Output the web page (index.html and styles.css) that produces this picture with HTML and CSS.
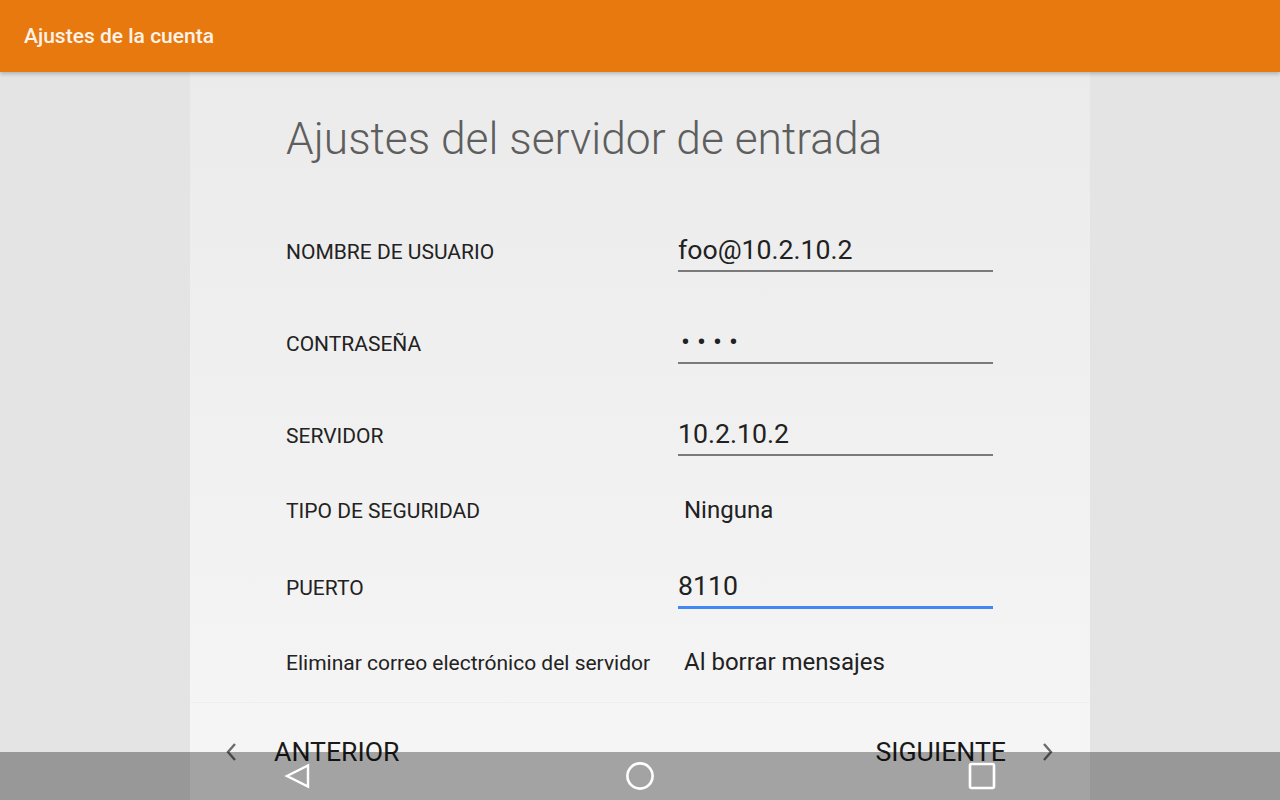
FILE: index.html
```html
<!DOCTYPE html>
<html lang="es">
<head>
<meta charset="utf-8">
<title>Ajustes de la cuenta</title>
<link rel="stylesheet" href="styles.css">
</head>
<body>
<header class="appbar">Ajustes de la cuenta</header>
<main class="stage">
  <section class="card">
    <div class="content">
      <h1 class="heading">Ajustes del servidor de entrada</h1>
      <div class="row row-user">
        <span class="label">NOMBRE DE USUARIO</span>
        <span class="field">foo@10.2.10.2</span>
      </div>
      <div class="row row-pass">
        <span class="label">CONTRASEÑA</span>
        <span class="field field-pass">••••</span>
      </div>
      <div class="row row-server">
        <span class="label">SERVIDOR</span>
        <span class="field">10.2.10.2</span>
      </div>
      <div class="row row-sec">
        <span class="label">TIPO DE SEGURIDAD</span>
        <span class="spinner">Ninguna</span>
      </div>
      <div class="row row-port">
        <span class="label">PUERTO</span>
        <span class="field field-focus">8110</span>
      </div>
      <div class="row row-del">
        <span class="label label-mixed">Eliminar correo electrónico del servidor</span>
        <span class="spinner">Al borrar mensajes</span>
      </div>
    </div>
    <footer class="footer">
      <div class="navbtn">
        <svg class="chev" width="12" height="20" viewBox="0 0 12 20"><polyline points="10,2 3,10 10,18" fill="none" stroke="#6b6b6b" stroke-width="2.4"/></svg>
        <span class="btntext">ANTERIOR</span>
      </div>
      <div class="navbtn">
        <span class="btntext">SIGUIENTE</span>
        <svg class="chev" width="12" height="20" viewBox="0 0 12 20"><polyline points="2,2 9,10 2,18" fill="none" stroke="#6b6b6b" stroke-width="2.4"/></svg>
      </div>
    </footer>
  </section>
</main>
<nav class="sysbar">
  <div class="slot">
    <svg width="28" height="28" viewBox="0 0 28 28"><polygon points="3,14 24,3.5 24,24.5" fill="none" stroke="#fff" stroke-width="2.4" stroke-linejoin="miter"/></svg>
  </div>
  <div class="slot">
    <svg width="30" height="30" viewBox="0 0 30 30"><circle cx="15" cy="15" r="12.6" fill="none" stroke="#fff" stroke-width="2.6"/></svg>
  </div>
  <div class="slot">
    <svg width="28" height="28" viewBox="0 0 28 28"><rect x="2" y="2" width="24" height="24" rx="1.5" fill="none" stroke="#fff" stroke-width="2.6"/></svg>
  </div>
</nav>
</body>
</html>
```

FILE: styles.css
```css
* { box-sizing: border-box; }
html, body { margin: 0; padding: 0; }
body {
  width: 1280px;
  height: 800px;
  overflow: hidden;
  background: #e4e4e4;
  font-family: Roboto, "Noto Sans", sans-serif;
  color: #212121;
}
.appbar {
  position: relative;
  z-index: 2;
  height: 72px;
  background: #e8790e;
  color: #fdf3ea;
  font-size: 21px;
  font-weight: 500;
  display: flex;
  align-items: center;
  padding-left: 24px;
  box-shadow: 0 2px 4px rgba(0,0,0,0.22);
}
.stage {
  display: flex;
  justify-content: center;
  height: 728px;
}
.card {
  width: 900px;
  display: flex;
  flex-direction: column;
  background: linear-gradient(#ebebeb, #f6f6f6);
}
.content {
  flex: 1;
  padding: 41px 0 0 96px;
}
.heading {
  margin: 0;
  font-family: "Roboto Light", Roboto, sans-serif;
  font-size: 44.3px;
  font-weight: 300;
  line-height: 52px;
  color: #5e5e5e;
}
.row {
  display: grid;
  grid-template-columns: 392px 315px;
  align-items: baseline;
}
.label {
  font-size: 21px;
  color: #222;
}
.field {
  font-size: 26.67px;
  line-height: 32px;
  padding-bottom: 4px;
  border-bottom: 2px solid #7a7a7a;
  color: #212121;
}
.field-pass {
  letter-spacing: 7px;
  padding-left: 3px;
}
.field-focus {
  border-bottom: 3px solid #4188f4;
}
.spinner {
  font-size: 24px;
  line-height: 30px;
  padding-left: 6px;
  color: #212121;
}
.row-user { margin-top: 69px; }
.row-pass { margin-top: 54px; }
.row-server { margin-top: 54px; }
.row-sec { margin-top: 39px; }
.row-port { margin-top: 45px; }
.row-del { margin-top: 38px; }

.footer {
  height: 98px;
  background: #f5f5f5;
  border-top: 1px solid #efefef;
  display: flex;
  justify-content: space-between;
  align-items: center;
  padding: 0 36px 0 35px;
}
.navbtn {
  display: flex;
  align-items: center;
}
.btntext {
  font-size: 26.67px;
  color: #1a1a1a;
}
.navbtn:first-child .btntext { margin: 0 0 0 37px; }
.navbtn:last-child .btntext { margin: 0 36px 0 0; }

.sysbar {
  position: fixed;
  left: 0;
  bottom: 0;
  width: 1280px;
  height: 48px;
  background: rgba(0,0,0,0.335);
  display: flex;
  justify-content: center;
  z-index: 3;
}
.slot {
  width: 342px;
  display: flex;
  justify-content: center;
  align-items: center;
}
.slot svg { display: block; }
```
